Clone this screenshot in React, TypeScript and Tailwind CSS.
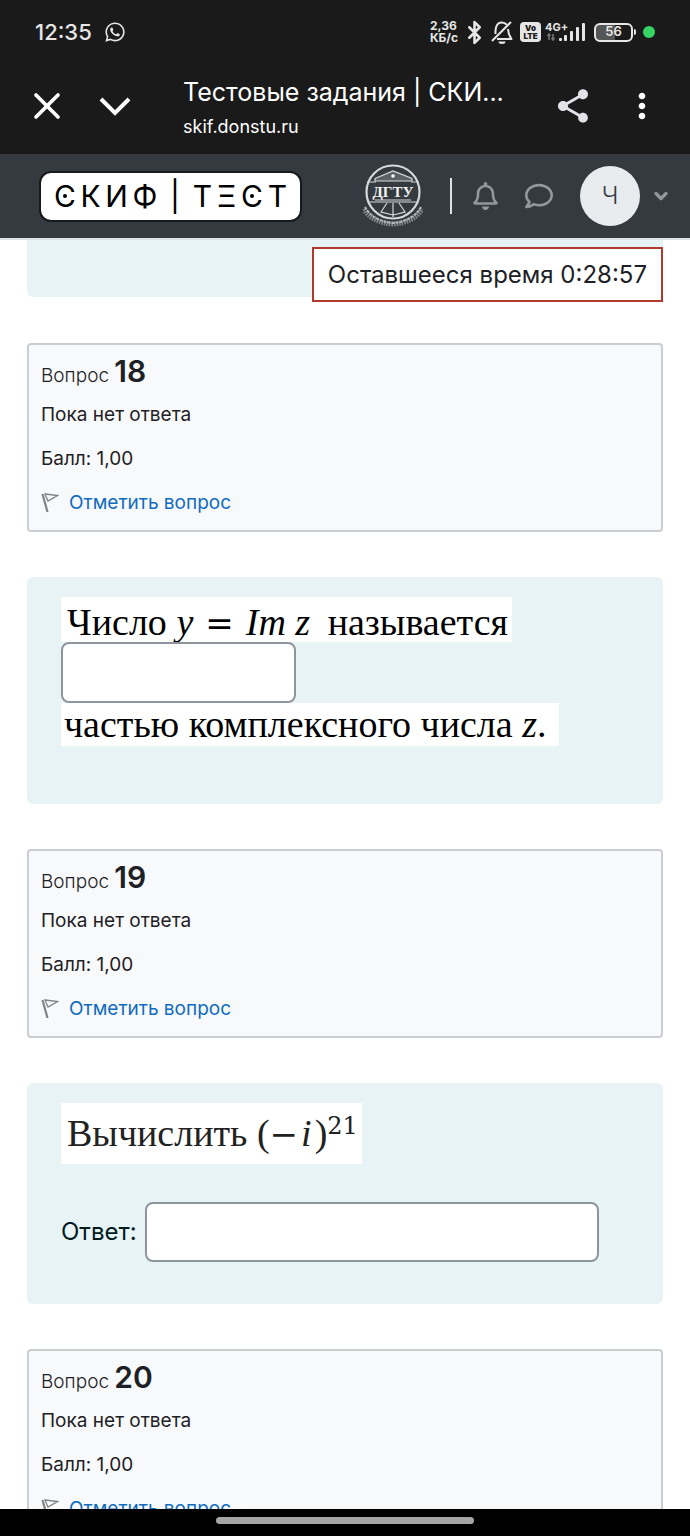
import { Bluetooth, ChevronDown, X } from 'lucide-react';
import { FaRegBell, FaRegComment, FaWhatsapp } from 'react-icons/fa';
import { MdMoreVert, MdShare } from 'react-icons/md';

const SignalBars = () => (
    <svg width="42" height="24" viewBox="0 0 42 24" fill="#e6e6e6">
        <text x="0" y="11" fontSize="11" fontWeight="700">4G+</text>
        <path d="M4 14v6M2.500 16 4 14l1.500 2M8 14v6M6.500 18 8 20l1.500-2" stroke="#777" strokeWidth="1.500" fill="none" />
        <rect x="14" y="18" width="3" height="3" rx="1" />
        <rect x="19" y="15" width="3" height="6" rx="1" />
        <rect x="25" y="11" width="3" height="10" rx="1" />
        <rect x="31" y="7" width="3" height="14" rx="1" />
        <rect x="37" y="3" width="3" height="18" rx="1" />
    </svg>
);

const MutedBell = () => (
    <svg width="22" height="24" viewBox="0 0 22 24" fill="none" stroke="#e6e6e6" strokeWidth="2" strokeLinejoin="round">
        <path d="M4.500 14c-.3-5 .5-11.500 6.500-11.500 2 0 3.500.8 4.800 2.200M17 9c.2 4 .8 6.500 3.500 10H6" />
        <path d="M20 2 1 21" />
        <path d="M7.500 21.500h7a3.500 2.500 0 0 1-7 0z" fill="#e6e6e6" strokeWidth="0" />
    </svg>
);

const Emblem = () => (
    <svg width="60" height="64" viewBox="0 0 60 64" fill="none" stroke="#d5d9dc">
        <path d="M1 45c5 9 15 14 29 15 14-1 24-6 29-15" stroke="#868c92" strokeWidth="5" strokeDasharray="1.500 1" />
        <path d="M2 43c5 9 15 15 28 16 13-1 23-7 28-16" stroke="#b4b9bd" strokeWidth="2" strokeDasharray="3 1" />
        <circle cx="30" cy="28" r="26.500" fill="#353a41" strokeWidth="2.200" />
        <path d="M12 14.500 30 7l19 7.500v2.500H12z" fill="#5a6066" strokeWidth="1.200" />
        <circle cx="30" cy="12" r="1.800" fill="#fff" stroke="none" />
        <path d="M4 18h9M48 18h8M6 38h48M12 36h36" strokeWidth="1" />
        <text
            x="30"
            y="33"
            textAnchor="middle"
            fontSize="15"
            fontWeight="700"
            fill="#f0f2f3"
            stroke="none"
            className="font-['Liberation_Serif',serif]"
        >
            ДГТУ
        </text>
        <path d="M24 39l-6 9 12 3 12-3-6-9M30 39v14" strokeWidth="1.200" />
    </svg>
);

const FlagIcon = () => (
    <svg width="18" height="20" viewBox="0 0 18 20" fill="none" stroke="#808386">
        <path d="M1.500 1l5 18" strokeWidth="2.200" />
        <path d="M4 1 16.500 2.500 7 8z" strokeWidth="1.300" />
    </svg>
);

const DottedC = () => (
    <span className="relative">
        С
        <span className="absolute top-1/2 left-1/2 size-1 -translate-x-1/2 -translate-y-1/2 rounded-full bg-black" />
    </span>
);

const QuestionInfo = ({ number }: { number: number }) => (
    <section className="flex flex-col gap-[14px] rounded-[4px] border-2 border-[#cacdd2] bg-[#f8f9fb] px-3 pt-[11px] pb-3 text-[19px] leading-[30px] text-[#1d2125]">
        <h3 className="h-[30px] font-light">
            Вопрос <span className="text-[30px] leading-[30px] font-semibold">{number}</span>
        </h3>
        <p>Пока нет ответа</p>
        <p>Балл: 1,00</p>
        <a href="#flag" className="flex items-center gap-[10px] text-[#0f6cbf]">
            <FlagIcon />
            Отметить вопрос
        </a>
    </section>
);

export default function App() {
    return (
        <div className="flex h-screen flex-col overflow-hidden bg-white font-['Inter','Noto_Sans',sans-serif] text-[#1d2125]">
            <header className="shrink-0 bg-[#1a1a1a] text-white">
                {/* Phone status bar */}
                <div className="flex h-16 items-center justify-between pr-[35px] pl-[35px] text-[#e6e6e6]">
                    <div className="flex items-center gap-3">
                        <span className="text-[22px] font-medium">12:35</span>
                        <FaWhatsapp className="size-[22px]" />
                    </div>
                    <div className="flex items-center gap-[7px]">
                        <div className="text-[12px] leading-[12px] font-bold">
                            <div>2,36</div>
                            <div>КБ/с</div>
                        </div>
                        <Bluetooth className="-mx-[3px] size-[25px]" strokeWidth={2.5} />
                        <MutedBell />
                        <div className="flex h-5 w-[21px] flex-col items-center justify-center rounded-[4px] bg-[#e6e6e6] text-[8px] leading-[8px] font-black text-[#1a1a1a]">
                            <span>Vo</span>
                            <span>LTE</span>
                        </div>
                        <div className="-ml-[3px]">
                            <SignalBars />
                        </div>
                        <div className="flex items-center gap-px">
                            <div className="flex h-[19px] w-[39px] items-center justify-center rounded-[6px] border-2 border-[#e6e6e6] bg-linear-to-r from-[#555] from-55% to-transparent to-55% text-[13px] font-semibold">
                                56
                            </div>
                            <div className="h-[6px] w-[2px] rounded-r bg-[#e6e6e6]" />
                        </div>
                        <span className="size-3 rounded-full bg-[#35d463]" />
                    </div>
                </div>
                {/* Browser toolbar */}
                <div className="flex h-[90px] items-start pr-7 pl-[25px]">
                    <button aria-label="Закрыть" className="mt-[20px]">
                        <X className="size-11" strokeWidth={2} />
                    </button>
                    <button aria-label="Свернуть" className="mt-[20px] ml-6">
                        <svg width="44" height="44" viewBox="0 0 44 44" fill="none" stroke="currentColor" strokeWidth="4">
                            <path d="M8 15l14 14 14-14" />
                        </svg>
                    </button>
                    <div className="ml-[46px] min-w-0 flex-1 pt-3">
                        <div className="text-[25px] leading-[33px] whitespace-nowrap">Тестовые задания | СКИ...</div>
                        <div className="text-[18px] leading-9">skif.donstu.ru</div>
                    </div>
                    <button aria-label="Поделиться" className="mt-[22px] text-[#e2e2e8]">
                        <MdShare className="size-10" />
                    </button>
                    <button aria-label="Меню" className="mt-[22px] ml-[29px]">
                        <MdMoreVert className="size-10" />
                    </button>
                </div>
            </header>

            <nav className="flex h-[86px] shrink-0 items-center border-b-2 border-[#dee2e6] bg-[#353a41] pr-[19px] pl-[39px]">
                <a
                    href="#home"
                    aria-label="СКИФ | ТЕСТ"
                    className="flex h-[51px] w-[263px] items-center justify-between rounded-[12px] border-2 border-[#17191c] bg-white px-[13px] text-[30px] text-black"
                >
                    <DottedC />
                    <span>К</span>
                    <span>И</span>
                    <span>Ф</span>
                    <span className="px-2">|</span>
                    <span>Т</span>
                    <span>Ξ</span>
                    <DottedC />
                    <span>Т</span>
                </a>
                <div className="ml-auto flex items-center">
                    <Emblem />
                    <div className="ml-[27px] h-9 w-[2px] bg-[#dee2e6]" />
                    <button aria-label="Уведомления" className="ml-5 text-[#92979b]">
                        <FaRegBell className="h-[28px] w-[27px]" />
                    </button>
                    <button aria-label="Сообщения" className="ml-[26px] text-[#92979b]">
                        <FaRegComment className="size-7" />
                    </button>
                    <button aria-label="Меню пользователя" className="ml-[27px] flex items-center gap-[11px]">
                        <span className="flex size-[60px] items-center justify-center rounded-full bg-[#e9ecef] text-[24px] font-light text-[#343a40]">
                            Ч
                        </span>
                        <ChevronDown className="size-5 text-[#92979b]" strokeWidth={4} />
                    </button>
                </div>
            </nav>

            <main className="relative min-h-0 flex-1 overflow-hidden px-[27px]">
                <div className="h-[57px] rounded-b-[6px] bg-[#e7f3f5]" />
                <div className="absolute top-[7px] right-[27px] border-2 border-[#b03a2e] bg-white px-[14px] py-[10px] text-[24px] leading-[31px]">
                    Оставшееся время 0:28:57
                </div>

                <div className="mt-[46px] flex flex-col gap-[45px]">
                    <QuestionInfo number={18} />
                    <section className="flex flex-col items-start rounded-[6px] bg-[#e7f3f5] px-[34px] pt-[20px] pb-[58px] font-['Liberation_Serif',serif] text-[38px] text-black">
                        <label htmlFor="answer-18" className="bg-white pt-[6px] pr-1 pl-[6px] leading-[39px]">
                            Число <i>y</i>
                            <span className="mx-3 font-['DejaVu_Serif',serif] text-[34px] leading-[30px]">=</span>
                            <i className="mr-2">Im z</i> называется
                        </label>
                        <input id="answer-18" className="h-[61px] w-[235px] rounded-[8px] border-2 border-[#8f959e] bg-white px-3" />
                        <p className="bg-white pr-3 pl-[3px] leading-[43px]">
                            частью комплексного числа <i>z</i>.
                        </p>
                    </section>

                    <QuestionInfo number={19} />
                    <section className="rounded-[6px] bg-[#e7f3f5] px-[34px] pt-5 pb-[42px]">
                        <p className="h-[61px] w-fit bg-white pr-1 pl-[6px] font-['Liberation_Serif',serif] text-[38px] leading-[61px] text-[#222]">
                            Вычислить (<span className="font-['DejaVu_Serif',serif] text-[34px]">−</span>
                            <i className="mx-[3px]">i</i>)<sup className="font-['DejaVu_Serif',serif] text-[24px]">21</sup>
                        </p>
                        <div className="mt-[38px] flex items-center gap-2 pr-[30px]">
                            <label htmlFor="answer-19" className="text-[24px] text-[#001a1e]">
                                Ответ:
                            </label>
                            <input id="answer-19" className="h-[60px] min-w-0 flex-1 rounded-[8px] border-2 border-[#8f959e] bg-white px-3" />
                        </div>
                    </section>

                    <QuestionInfo number={20} />
                </div>
            </main>

            <footer className="flex h-[27px] shrink-0 justify-center bg-black pt-2">
                <div className="h-[7px] w-[258px] rounded-full bg-[#a5a5a5]" />
            </footer>
        </div>
    );
}
